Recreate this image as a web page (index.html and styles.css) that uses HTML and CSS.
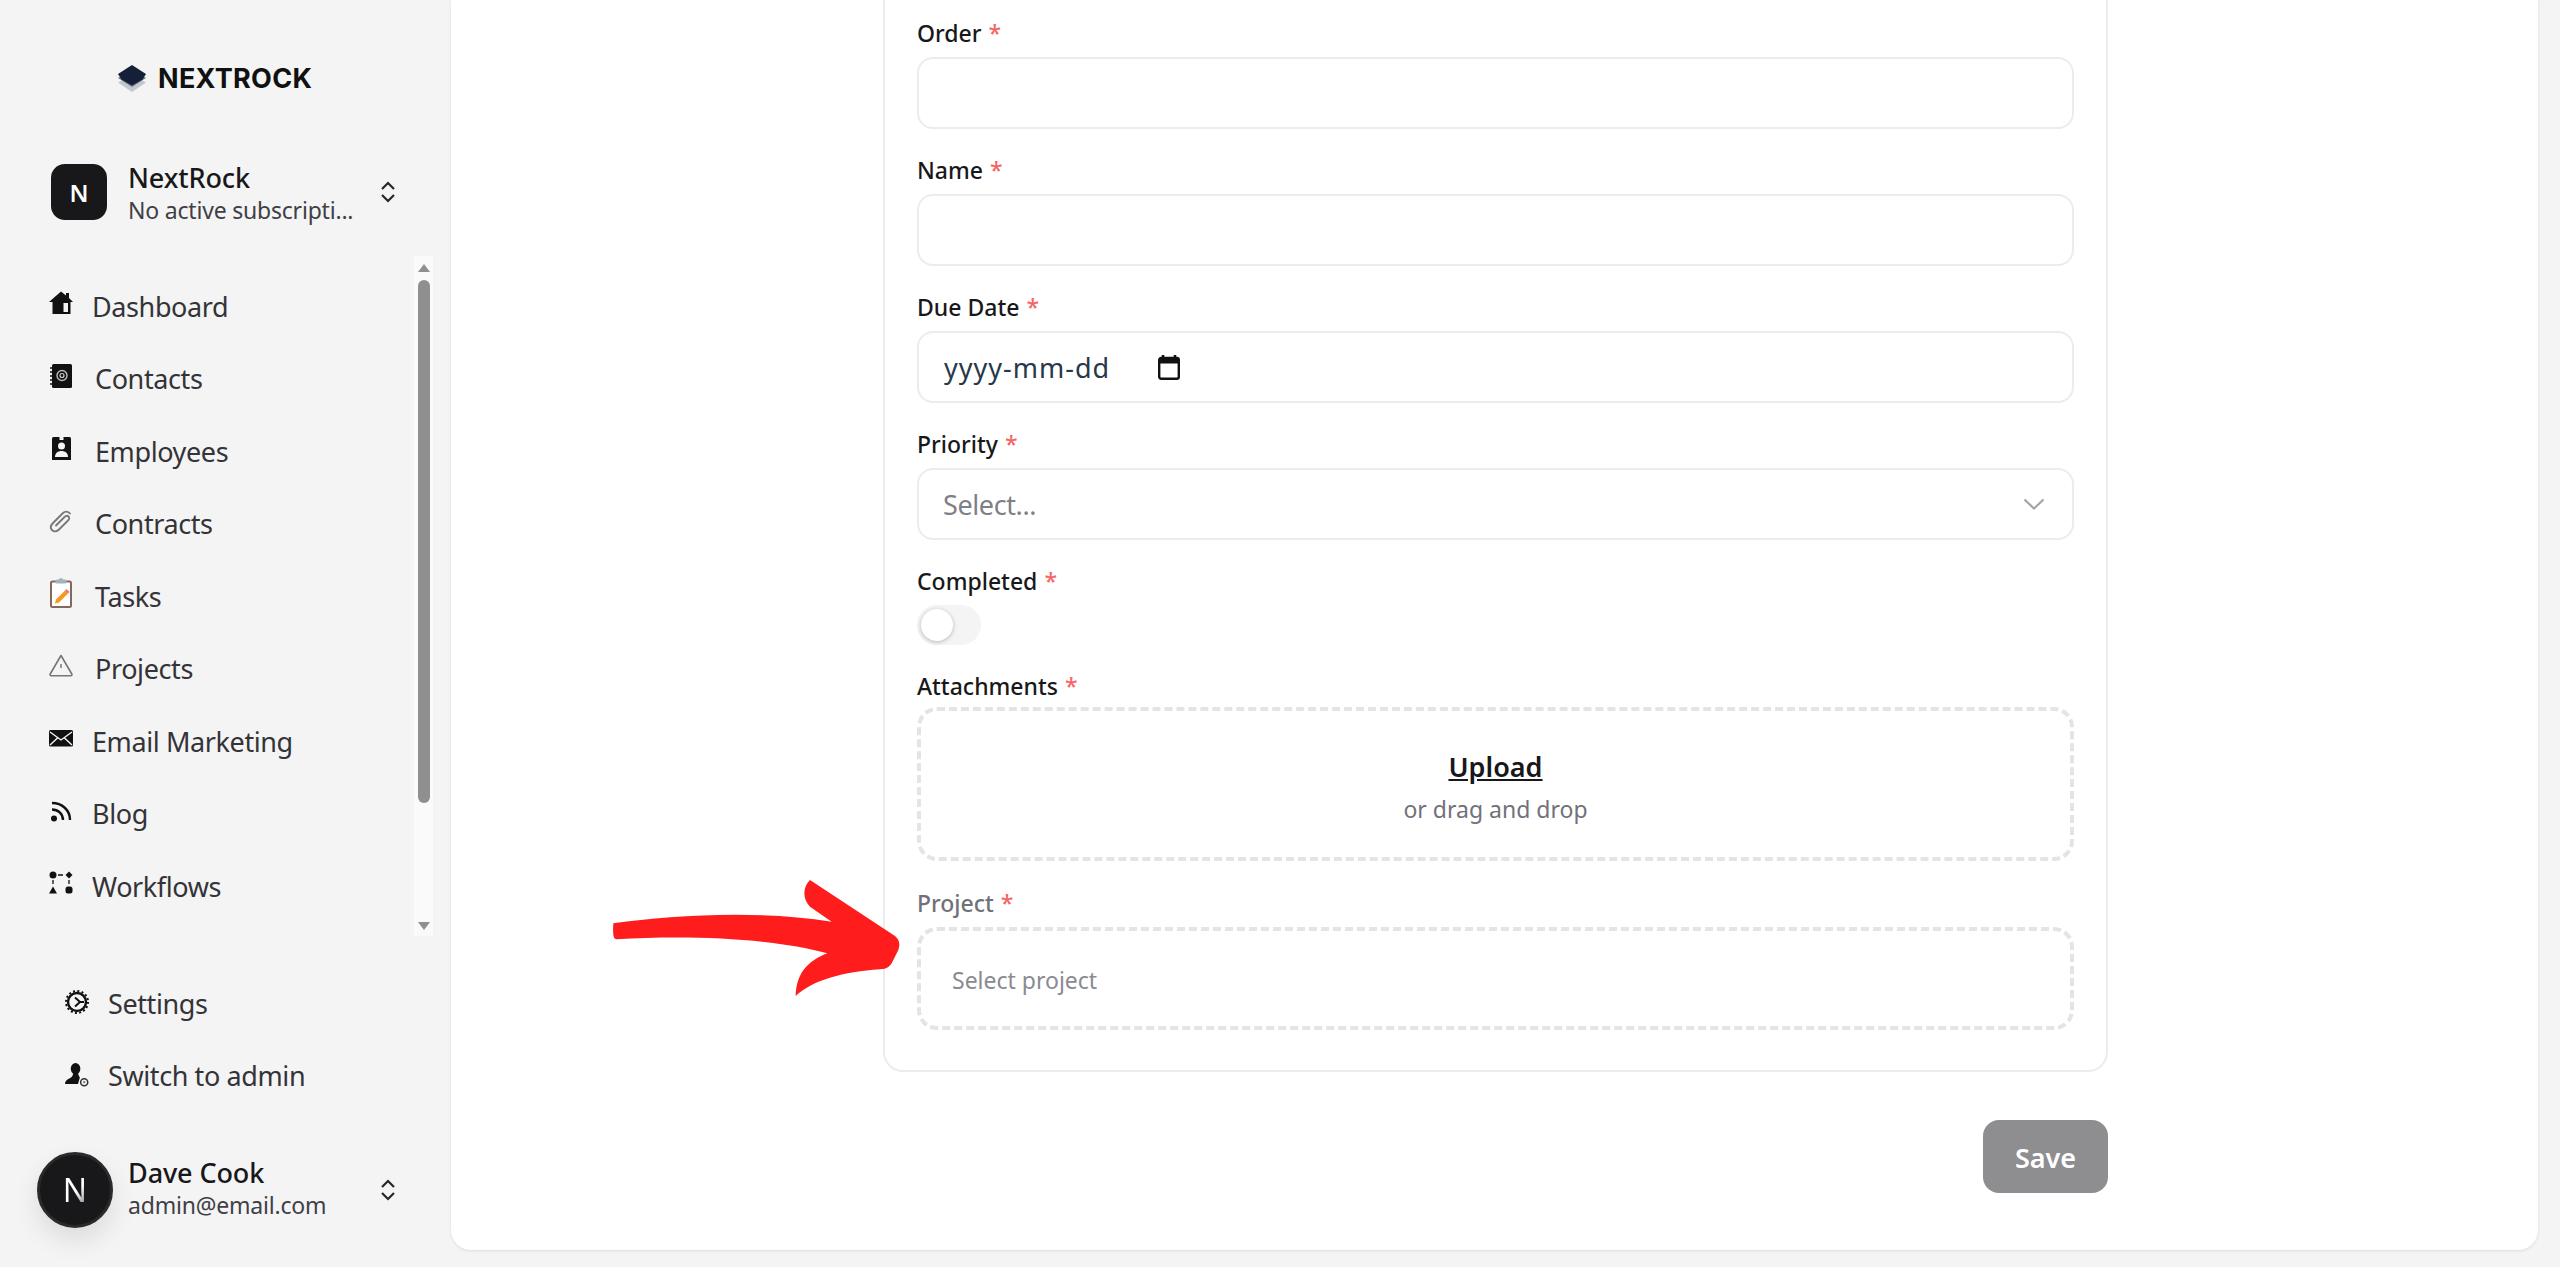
FILE: index.html
```html
<!DOCTYPE html>
<html lang="en">
<head>
<meta charset="utf-8">
<title>NextRock</title>
<link rel="stylesheet" href="styles.css">
</head>
<body>
<div class="app">
  <aside class="sidebar">
    <div class="brand">
      <svg class="brand-icon" viewBox="0 0 28 28"><path d="M14 10 28 17.500 14 27 0 17.500Z" fill="#c3c7d0"/><path d="M14 5 28 13 14 22 0 13Z" fill="#6d7588"/><path d="M14 0 28 9 24.500 14.500 14 20.500 3.500 14.500 0 9Z" fill="#151f38"/></svg>
      <span class="brand-name">NEXTROCK</span>
    </div>
    <div class="switcher">
      <div class="org-avatar">N</div>
      <div class="who who--org">
        <div class="who-name">NextRock</div>
        <div class="who-sub">No active subscripti...</div>
      </div>
      <svg class="updown" viewBox="0 0 16 22"><path d="M2 8 8 2l6 6M2 14l6 6 6-6" fill="none" stroke="#27272a" stroke-width="2.200"/></svg>
    </div>
    <div class="nav-wrap">
      <nav class="nav">
        <a class="nav-item">
          <svg class="nav-icon" viewBox="0 0 24 24"><path d="M12 .5 17 4.500V2h3v5l4 4h-2.500v12H3.500V11H0Z"/><rect x="14.500" y="12" width="4.500" height="9" fill="#f4f4f4"/></svg>
          <span>Dashboard</span>
        </a>
        <a class="nav-item nav-item--wide">
          <svg class="nav-icon" viewBox="0 0 24 24"><rect x="3" y="0" width="20" height="24" rx="1.500"/><path d="M1 4h3M1 8h3M1 12h3M1 16h3M1 20h3" stroke="#111" stroke-width="1.500"/><circle cx="13" cy="11.500" r="5" fill="none" stroke="#bbb" stroke-width="1.400"/><circle cx="13" cy="11.500" r="2" fill="none" stroke="#ccc" stroke-width="1.200"/></svg>
          <span>Contacts</span>
        </a>
        <a class="nav-item nav-item--wide">
          <svg class="nav-icon" viewBox="0 0 24 24"><rect x="3" y="1" width="19" height="24" rx="1.500"/><rect x="10.500" y="0" width="4" height="4" fill="#f4f4f4"/><circle cx="12.500" cy="10" r="3.500" fill="#f4f4f4"/><path d="M6 21c0-4 3-6 6.500-6s6.500 2 6.500 6Z" fill="#f4f4f4"/></svg>
          <span>Employees</span>
        </a>
        <a class="nav-item nav-item--wide">
          <svg class="nav-icon" viewBox="0 0 24 24"><path d="M21 4.500c-2-2.500-5-2.500-7-.5L4 14c-2.500 2.500-3 5-1 7s5 1.500 7-.5l9-9c1.500-1.500 1.500-3 .5-4s-2.500-1-4 .5L7 16.500" fill="none" stroke="#777" stroke-width="1.800" stroke-linecap="round"/></svg>
          <span>Contracts</span>
        </a>
        <a class="nav-item nav-item--wide">
          <svg class="nav-icon nav-icon--tall" viewBox="0 0 24 30"><rect x="2" y="3.500" width="20" height="25.500" rx="1.500" fill="#fff" stroke="#85685c" stroke-width="2"/><rect x="6.500" y="1.500" width="11" height="4" rx="1.500" fill="#a3b3bb"/><circle cx="12" cy="2" r="2" fill="#a3b3bb"/><path d="M7 21.500 16 12.500l3 3L10 24.500l-4 1Z" fill="#f59a1c"/><path d="M16 12.500l1.500-1.500 3 3-1.500 1.500Z" fill="#e76f7a"/></svg>
          <span>Tasks</span>
        </a>
        <a class="nav-item nav-item--wide">
          <svg class="nav-icon" viewBox="0 0 24 24"><path d="M12 1.500 22.800 20a1.200 1.200 0 0 1-1 1.800H2.200a1.200 1.200 0 0 1-1-1.800Z" fill="none" stroke="#777" stroke-width="1.600" stroke-linejoin="round"/><path d="M12 10v4" stroke="#777" stroke-width="1.500"/></svg>
          <span>Projects</span>
        </a>
        <a class="nav-item">
          <svg class="nav-icon" viewBox="0 0 24 24"><rect x="0" y="4" width="24" height="16.500" rx="1.500" fill="#111"/><path d="M1 6l11 8 11-8M1 19l7.500-7M23 19l-7.500-7" fill="none" stroke="#f4f4f4" stroke-width="1.400"/></svg>
          <span>Email Marketing</span>
        </a>
        <a class="nav-item">
          <svg class="nav-icon" viewBox="0 0 24 24"><circle cx="5" cy="19.500" r="3"/><path d="M3 10.500c6 0 11 4 11 10.500M3 4c10 0 18 7 18 17" fill="none" stroke="#111" stroke-width="2.400"/></svg>
          <span>Blog</span>
        </a>
        <a class="nav-item">
          <svg class="nav-icon" viewBox="0 0 24 24"><circle cx="4" cy="4" r="3.500"/><path d="M20 .5l3.500 3.500-3.500 3.500L16.500 4Z"/><path d="M4 15.500l4 7H0Z"/><rect x="16.500" y="15.500" width="7" height="7" rx="2.500"/><path d="M9 4h5M4 9v4M20 9v4" stroke="#111" stroke-width="1.300" fill="none"/></svg>
          <span>Workflows</span>
        </a>
      </nav>
      <div class="scrollbar">
        <svg class="scroll-arrow" viewBox="0 0 12 8"><path d="M6 0 12 8H0Z"/></svg>
        <div class="scroll-thumb"></div>
        <svg class="scroll-arrow scroll-arrow--down" viewBox="0 0 12 8"><path d="M0 0H12L6 8Z"/></svg>
      </div>
    </div>
    <div class="foot-nav">
      <a class="foot-item">
        <svg class="foot-icon" viewBox="0 0 24 24"><circle cx="12" cy="12" r="9" fill="none" stroke="#111" stroke-width="2.400"/><circle cx="12" cy="12" r="11" fill="none" stroke="#111" stroke-width="2" stroke-dasharray="2 2.320"/><path d="M10 7.500 15 12h4M15 12l-5 4.500" fill="none" stroke="#111" stroke-width="2"/></svg>
        <span>Settings</span>
      </a>
      <a class="foot-item">
        <svg class="foot-icon" viewBox="0 0 25 25"><ellipse cx="11" cy="6" rx="5" ry="6"/><path d="M8.500 10h5c.5 3 1 4 2 5l-2 7H0c0-3 2-5 5-6 2.500-1 3.500-3 3.500-6Z"/><circle cx="20" cy="20" r="3.700" fill="none" stroke="#333" stroke-width="1.600"/><circle cx="20" cy="20" r="1.200" fill="#777"/></svg>
        <span>Switch to admin</span>
      </a>
    </div>
    <div class="user">
      <div class="user-avatar"><span class="user-mark">N</span></div>
      <div class="who">
        <div class="who-name">Dave Cook</div>
        <div class="who-sub">admin@email.com</div>
      </div>
      <svg class="updown" viewBox="0 0 16 22"><path d="M2 8 8 2l6 6M2 14l6 6 6-6" fill="none" stroke="#27272a" stroke-width="2.200"/></svg>
    </div>
  </aside>
  <main class="main">
    <div class="column">
      <form class="card">
        <div class="field">
          <div class="label">Order <span class="req">*</span></div>
          <div class="box"></div>
        </div>
        <div class="field">
          <div class="label">Name <span class="req">*</span></div>
          <div class="box"></div>
        </div>
        <div class="field">
          <div class="label">Due Date <span class="req">*</span></div>
          <div class="box box--date">
            <span class="date-text">yyyy-mm-dd</span>
            <svg class="cal" viewBox="0 0 22 25"><path d="M5 0v4M17 0v4" stroke="#111" stroke-width="2.600"/><rect x="1.200" y="3" width="19.600" height="20.800" rx="2" fill="none" stroke="#111" stroke-width="2.400"/><rect x="1" y="3" width="20" height="5.500" fill="#111"/></svg>
          </div>
        </div>
        <div class="field">
          <div class="label">Priority <span class="req">*</span></div>
          <div class="box box--select">
            <span class="placeholder">Select...</span>
            <svg class="chev" viewBox="0 0 22 12"><path d="M1.500 1.500 11 10.500l9.500-9" fill="none" stroke="#a1a1aa" stroke-width="2"/></svg>
          </div>
        </div>
        <div class="field">
          <div class="label">Completed <span class="req">*</span></div>
          <div class="toggle"><div class="knob"></div></div>
        </div>
        <div class="field field--tight">
          <div class="label">Attachments <span class="req">*</span></div>
          <div class="drop">
            <span class="upload">Upload</span>
            <span class="drop-hint">or drag and drop</span>
          </div>
        </div>
        <div class="field">
          <div class="label label--muted">Project <span class="req">*</span></div>
          <div class="picker">Select project</div>
        </div>
      </form>
      <div class="actions"><button class="save" type="button">Save</button></div>
    </div>
  </main>
  <svg class="arrow" viewBox="0 0 1500 720"><path d="M70 190C250 165 500 150 725 185L660 140C640 120 635 85 660 60L915 228C930 240 930 255 925 270L905 310C895 325 885 327 870 328 760 335 670 360 617 408 620 340 650 305 712 280 550 235 300 225 80 238 70 238 68 225 70 190Z" fill="#fe1c1c"/></svg>
</div>
</body>
</html>
```
FILE: styles.css
```css
* { box-sizing: border-box; }
html, body { margin: 0; height: 100%; overflow: hidden; }
body {
  background: #f4f4f4;
  color: #18181b;
  font-family: "Noto Sans", "Open Sans", sans-serif;
  font-size: 27px;
}
.app { position: relative; display: flex; width: 2560px; height: 1267px; }

/* Sidebar */
.sidebar { width: 451px; flex: none; display: flex; flex-direction: column; }
.brand { height: 164px; padding: 65px 0 0 118px; display: flex; align-items: flex-start; }
.brand-icon { width: 28px; height: 28px; }
.brand-name {
  margin-left: 12px;
  font-family: "Inter", sans-serif;
  font-size: 27px;
  line-height: 28px;
  font-weight: 700;
  letter-spacing: 0.3px;
  color: #111;
}
.switcher { height: 56px; padding-left: 51px; display: flex; align-items: center; }
.org-avatar {
  width: 56px; height: 56px; flex: none;
  border-radius: 14px;
  background: #18181b; color: #fff;
  display: flex; align-items: center; justify-content: center;
  font-size: 24px; font-weight: 600;
}
.who { margin-left: 21px; width: 252px; flex: none; }
.who--org { padding-top: 3px; }
.who-name { font-size: 27px; line-height: 32px; font-weight: 500; color: #18181b; white-space: nowrap; letter-spacing: -0.1px; }
.who-sub { font-size: 23px; line-height: 32px; color: #3f3f46; white-space: nowrap; letter-spacing: -0.2px; }
.updown { width: 16px; height: 22px; flex: none; }

.nav-wrap { margin-top: 36px; height: 680px; display: flex; }
.nav { width: 414px; flex: none; padding: 14px 0 0 49px; }
.nav-item {
  height: 72.5px;
  display: flex; align-items: center;
  color: #333338;
  gap: 19px;
  letter-spacing: -0.4px;
}
.nav-item--wide { gap: 22px; }
.nav-icon { width: 24px; height: 24px; flex: none; margin-bottom: 6px; fill: #111; }
.nav-icon--tall { height: 30px; }
.scrollbar {
  width: 19px; flex: none;
  background: #fafafa;
  display: flex; flex-direction: column; align-items: center;
  padding-top: 8px;
}
.scroll-arrow { width: 12px; height: 8px; fill: #8f8f8f; flex: none; }
.scroll-thumb { width: 12px; height: 523px; margin-top: 8px; border-radius: 6px; background: #8f8f8f; }
.scroll-arrow--down { margin-top: auto; margin-bottom: 6px; }

.foot-nav { margin-top: 31px; padding-left: 65px; }
.foot-item { height: 72.5px; display: flex; align-items: center; gap: 19px; color: #333338; letter-spacing: -0.4px; }
.foot-icon { width: 24px; height: 24px; flex: none; margin-bottom: 2px; fill: #111; }
.user { margin-top: 40px; height: 76px; padding-left: 37px; display: flex; align-items: center; }
.user-avatar {
  width: 76px; height: 76px; flex: none;
  border-radius: 50%;
  background: #18181b; border: 3px solid #2a2a2a;
  display: flex; align-items: center; justify-content: center;
  box-shadow: 0 12px 26px rgba(0, 0, 0, .1);
}
.user-mark {
  font-size: 32px; line-height: 1;
  background: linear-gradient(135deg, #fff 55%, #777);
  -webkit-background-clip: text; background-clip: text;
  color: transparent;
}
.user .who { margin-left: 15px; padding-bottom: 2px; }

/* Main */
.main {
  width: 2087px; height: 1250px; flex: none;
  background: #fff;
  border-radius: 0 0 20px 20px;
  box-shadow: 0 1px 3px rgba(0, 0, 0, .1);
  padding-left: 432px;
}
.column { width: 1225px; }
.card {
  border: 2px solid #ececee;
  border-top: 0;
  border-radius: 0 0 20px 20px;
  padding: 18px 32px 40px;
  display: flex; flex-direction: column; gap: 26px;
}
.field { display: flex; flex-direction: column; gap: 9px; }
.field--tight { gap: 6px; margin-bottom: 1px; }
.label { font-size: 23px; line-height: 30px; font-weight: 500; color: #18181b; }
.label--muted { color: #71717a; }
.req { color: #f56565; margin-left: 1px; }
.box {
  height: 72px;
  border: 2px solid #ececee;
  border-radius: 16px;
  display: flex; align-items: center;
}
.box--date { padding-left: 25px; }
.date-text { font-size: 27px; color: #27384a; width: 214px; letter-spacing: 1px; }
.cal { width: 22px; height: 25px; }
.box--select { padding: 0 27px 0 24px; justify-content: space-between; }
.placeholder { font-size: 27px; color: #7f7f88; letter-spacing: -0.4px; }
.chev { width: 22px; height: 12px; }
.toggle {
  width: 64px; height: 40px;
  border-radius: 20px;
  background: #f4f4f5;
  padding: 4px;
}
.knob { width: 32px; height: 32px; border-radius: 50%; background: #fff; box-shadow: 0 1px 4px rgba(0, 0, 0, .25); }
.drop {
  height: 154px;
  border: 4px dashed #e4e4e7;
  border-radius: 20px;
  padding-top: 6px;
  display: flex; flex-direction: column; align-items: center; justify-content: center;
  gap: 8px;
}
.upload { font-size: 27px; line-height: 36px; font-weight: 600; text-decoration: underline; color: #18181b; }
.drop-hint { font-size: 23px; line-height: 32px; color: #71717a; }
.picker {
  height: 103px;
  border: 4px dashed #e4e4e7;
  border-radius: 20px;
  padding: 2px 0 0 31px;
  display: flex; align-items: center;
  font-size: 23px; color: #8a8a92;
}
.actions { margin-top: 48px; display: flex; justify-content: flex-end; }
.save {
  width: 125px; height: 73px;
  border: 0; border-radius: 16px;
  padding: 2px 0 0;
  background: #8e8e90; color: #fff;
  font-family: inherit; font-size: 27px; font-weight: 600;
}

/* Annotation drawn over the screenshot */
.arrow { position: absolute; left: 590px; top: 860px; width: 500px; height: 240px; }
```
